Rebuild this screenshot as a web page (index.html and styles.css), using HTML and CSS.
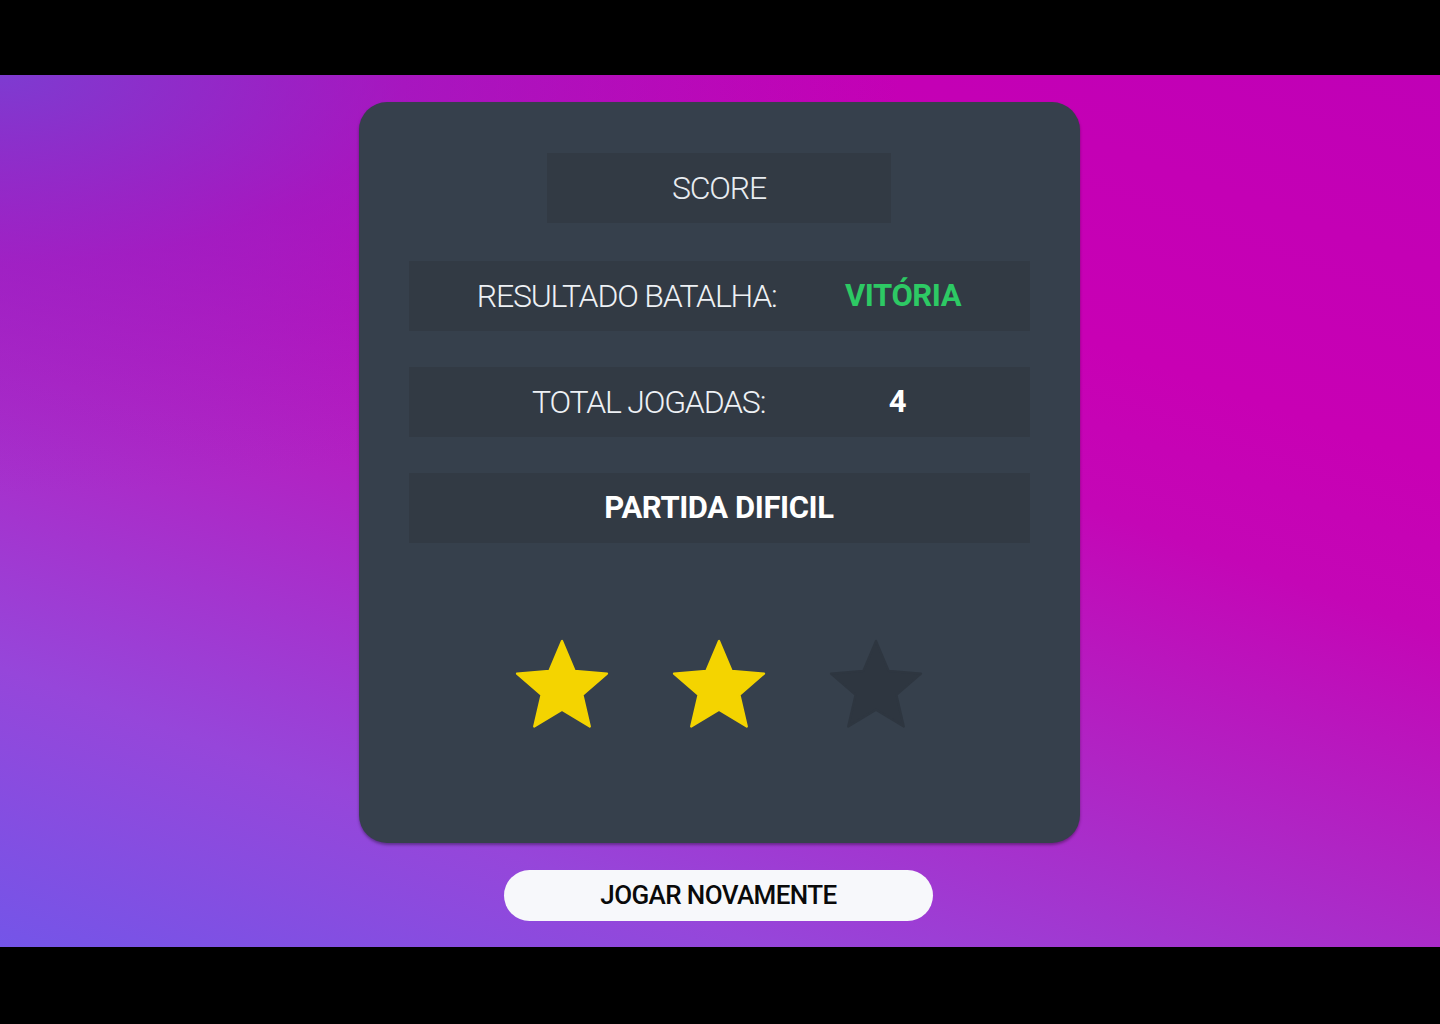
FILE: index.html
```html
<!DOCTYPE html>
<html lang="pt">
<head>
<meta charset="utf-8">
<title>Score</title>
<link rel="stylesheet" href="styles.css">
</head>
<body>
<main class="stage">
  <section class="card">
    <div class="score-title">SCORE</div>
    <div class="row"><span class="label">RESULTADO BATALHA:</span><span class="value win">VITÓRIA</span></div>
    <div class="row"><span class="label">TOTAL JOGADAS:</span><span class="value">4</span></div>
    <div class="row row-last"><span class="value">PARTIDA DIFICIL</span></div>
    <div class="stars">
      <svg class="star on" viewBox="0 0 24 24"><path d="M12 17.27L18.18 21l-1.64-7.03L22 9.24l-7.19-.61L12 2 9.19 8.63 2 9.24l5.46 4.73L5.82 21z"/></svg>
      <svg class="star on" viewBox="0 0 24 24"><path d="M12 17.27L18.18 21l-1.64-7.03L22 9.24l-7.19-.61L12 2 9.19 8.63 2 9.24l5.46 4.73L5.82 21z"/></svg>
      <svg class="star off" viewBox="0 0 24 24"><path d="M12 17.27L18.18 21l-1.64-7.03L22 9.24l-7.19-.61L12 2 9.19 8.63 2 9.24l5.46 4.73L5.82 21z"/></svg>
    </div>
  </section>
  <button class="again">JOGAR NOVAMENTE</button>
</main>
</body>
</html>
```
FILE: styles.css
```css
* { box-sizing: border-box; }
html, body { margin: 0; padding: 0; }
body {
  background: #000;
  height: 1024px;
  padding-top: 75px;
  font-family: Roboto, "Liberation Sans", sans-serif;
}
.stage {
  height: 872px;
  display: flex;
  flex-direction: column;
  align-items: center;
  justify-content: center;
  gap: 27px;
  background:
    radial-gradient(ellipse 900px 420px at 0% 0%, rgba(122, 62, 210, 0.95) 0%, rgba(140, 40, 200, 0.55) 45%, rgba(170, 20, 190, 0) 100%),
    linear-gradient(20deg, #7455e8 0%, #9646da 20%, #b024c4 42%, #c406b6 60%, #c800b4 72%, #c000b6 100%);
}
.card {
  width: 721px;
  background: #36404c;
  border-radius: 28px;
  padding: 51px 50px 103px;
  display: flex;
  flex-direction: column;
  align-items: center;
  margin-left: -2px;
  box-shadow: 0 2px 3px rgba(0, 0, 0, 0.35);
}
.score-title {
  width: 344px;
  height: 70px;
  background: #323a44;
  color: #e8ecf1;
  font-weight: 300;
  font-size: 32px;
  letter-spacing: -1.2px;
  display: flex;
  align-items: center;
  justify-content: center;
  margin-bottom: 38px;
}
.row {
  width: 621px;
  height: 70px;
  background: #323a44;
  display: flex;
  align-items: center;
  justify-content: space-evenly;
  margin-bottom: 36px;
}
.row-last { margin-bottom: 0; }
.label { color: #eef1f5; font-weight: 300; font-size: 32px; letter-spacing: -1.2px; }
.value { color: #ffffff; font-weight: 700; font-size: 31px; letter-spacing: -0.4px; }
.value.win { color: #2dc964; }
.stars {
  margin-top: 89px;
  display: flex;
  gap: 49px;
}
.star { width: 108px; height: 108px; display: block; }
.star path { stroke-width: 0.5; stroke-linejoin: round; }
.star.on path { fill: #f4d400; stroke: #f4d400; }
.star.off path { fill: #2e3640; stroke: #2e3640; }
.again {
  width: 429px;
  height: 51px;
  border: none;
  border-radius: 26px;
  background: #f7f8fb;
  color: #0a0a0a;
  font-family: Roboto, "Liberation Sans", sans-serif;
  font-weight: 500;
  font-size: 26px;
  letter-spacing: -0.6px;
  padding: 0;
  margin-left: -3px;
}
```
